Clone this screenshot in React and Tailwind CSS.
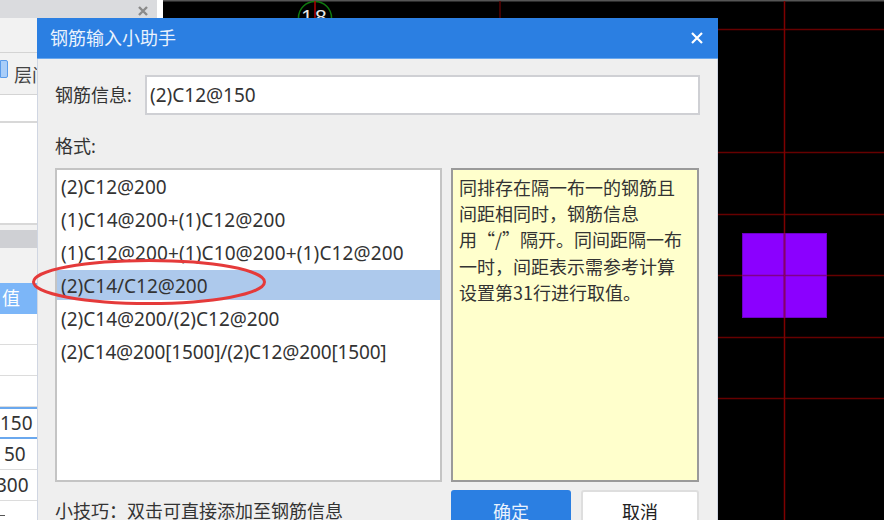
const FONT = "font-['Noto_Sans','Noto_Sans_CJK_SC',sans-serif]";
const CJK = "font-['Noto_Sans_CJK_SC','Noto_Sans',sans-serif]";

function LeftPanel() {
  const rowClass = "h-[31px] bg-white border-b border-[#dcdcdc] text-[19px] leading-[30px] text-[#333] whitespace-nowrap";
  return (
    <div className="w-[163px] h-[520px] shrink-0 bg-white flex flex-col overflow-hidden">
      <div className="w-[157px] h-[18px] shrink-0 bg-[#dadbde] flex justify-end items-start pr-[8px]">
        <svg width="12" height="12" viewBox="0 0 12 12" className="mt-[5px]"><path d="M2 2l8 8M10 2l-8 8" stroke="#8a8a8a" strokeWidth="2.4" /></svg>
      </div>
      <div className="h-[35px] shrink-0 bg-[#f2f2f2] border-b border-[#d4d4d4]" />
      <div className="h-[42px] shrink-0 bg-[#f2f2f2] border-b border-[#d4d4d4] relative">
        <div className="absolute left-0 top-[7px] w-[8px] h-[18px] bg-[#a9cdf8] border border-[#5a9bea] rounded-r-[2px]" />
        <span className="absolute left-[14px] top-[9px] text-[18px] leading-[26px] text-[#444]">层间</span>
      </div>
      <div className="h-[28px] shrink-0 bg-white border-b-2 border-[#d8d8d8]" />
      <div className="h-[102px] shrink-0 bg-white border-b-2 border-[#d8d8d8]" />
      <div className="h-[5px] shrink-0 bg-[#f2f2f2]" />
      <div className="h-[18px] shrink-0 bg-[#cfd0d4]" />
      <div className="h-[35px] shrink-0 bg-[#f2f2f2]" />
      <div className="h-[31px] shrink-0 bg-[#7cb6f8] text-[18px] leading-[31px] text-white pl-[2px]">值</div>
      <div className={rowClass} />
      <div className={rowClass} />
      <div className={rowClass} />
      <div className="h-[32px] bg-white border-y-2 border-[#6aa8ee] text-[19px] leading-[28px] text-[#333]">150</div>
      <div className={rowClass + " pl-[4px]"}>50</div>
      <div className={rowClass + " -ml-[4px]"}>300</div>
      <div className="h-[18px] bg-white relative"><div className="absolute left-0 bottom-[3px] w-[5px] h-[1px] bg-[#555]" /></div>
    </div>
  );
}

function Canvas() {
  const ys = [29.5, 152.5, 214.5, 275.5, 337.5, 398.5];
  return (
    <div className="relative flex-1 h-[520px] bg-black overflow-hidden">
      <svg width="721" height="520" className="block">
        <rect x="0" y="0" width="721" height="1.5" fill="#555" />
        {ys.map((y) => (
          <line key={y} x1="555" x2="721" y1={y} y2={y} stroke="#660000" strokeWidth="1.6" />
        ))}
        <rect x="579.5" y="233.5" width="84" height="84" fill="#8b00ff" stroke="#6a00c4" strokeWidth="1" />
        <line x1="579" x2="664" y1="275.5" y2="275.5" stroke="#80008c" strokeWidth="1.6" />
        <line x1="621.5" x2="621.5" y1="1" y2="520" stroke="#7e0000" strokeWidth="1.5" />
        <line x1="621.5" x2="621.5" y1="233" y2="318" stroke="#86006a" strokeWidth="1.5" />
        <line x1="337" x2="337" y1="1" y2="20" stroke="#5a0000" strokeWidth="1.5" />
        <circle cx="152" cy="18" r="16.5" fill="none" stroke="#0f7a0f" strokeWidth="1.5" />
        <line x1="152" x2="152" y1="1" y2="20" stroke="#b00000" strokeWidth="1.5" />
        <text x="152" y="24" fill="#e8e8e8" fontSize="21" textAnchor="middle" letterSpacing="2" fontFamily="Liberation Sans, sans-serif">18</text>
      </svg>
    </div>
  );
}

function Dialog() {
  const items = [
    { t: "(2)C12@200", c: "" },
    { t: "(1)C14@200+(1)C12@200", c: "tracking-[0.1px]" },
    { t: "(1)C12@200+(1)C10@200+(1)C12@200", c: "tracking-[0.12px]" },
    { t: "(2)C14/C12@200", c: "" },
    { t: "(2)C14@200/(2)C12@200", c: "" },
    { t: "(2)C14@200[1500]/(2)C12@200[1500]", c: "tracking-[-0.15px]" },
  ];
  const tip = [
    "同排存在隔一布一的钢筋且",
    "间距相同时，钢筋信息",
    "用“/”隔开。同间距隔一布",
    "一时，间距表示需参考计算",
    "设置第31行进行取值。",
  ];
  return (
    <div className="absolute left-[37px] top-[18px] w-[681px] h-[502px] bg-[#efefef] border-x border-[#d0d6e2] flex flex-col text-[18px] text-[#333]">
      <div className="h-[41px] -mx-px shrink-0 bg-[#2b7fe2] border-b border-[#6aa8ee] flex items-center justify-between pl-[13px] pr-[14px] text-white">
        <span className="text-[#e9f2fd]">钢筋输入小助手</span>
        <svg width="14" height="14" viewBox="0 0 14 14"><path d="M2 2l10 10M12 2L2 12" stroke="#fff" strokeWidth="2.2" /></svg>
      </div>
      <div className="flex-1 flex flex-col pl-[17px] pr-[18px] pt-[16px] overflow-hidden">
        <div className="flex items-center h-[40px] shrink-0 -mr-px">
          <span className="w-[90px] shrink-0">钢筋信息:</span>
          <div className="flex-1 h-[40px] bg-white border-2 border-[#cfd0d4] pl-[3px] leading-[36px] text-[19px]">(2)C12@150</div>
        </div>
        <div className="mt-[18px] h-[26px] leading-[26px] shrink-0">格式:</div>
        <div className="mt-[9px] flex gap-[9px] h-[314px] shrink-0">
          <div className="w-[387px] bg-white border-2 border-[#c4c4c4] pt-px flex flex-col gap-[3px] text-[19px]">
            {items.map((it, i) => (
              <div key={it.t} className={"h-[30px] leading-[32px] pl-[4px] whitespace-nowrap " + it.c + " " + (i === 3 ? "bg-[#adc9ec]" : "")}>{it.t}</div>
            ))}
          </div>
          <div className={"flex-1 bg-[#ffffcc] border-2 border-[#9a9a9a] pl-[6px] pt-[4px] leading-[26.2px] " + CJK}>
            {tip.map((t) => (
              <div key={t} className="whitespace-nowrap">{t}</div>
            ))}
          </div>
        </div>
        <div className="mt-[8px] flex items-start">
          <span className="mt-[6px] leading-[30px] whitespace-nowrap">小技巧：双击可直接添加至钢筋信息</span>
          <div className="ml-auto flex gap-[10px]">
            <div className="w-[120px] h-[40px] bg-[#2b7fe2] rounded-[3px] text-center leading-[44px] text-[#e9f2fd]">确定</div>
            <div className="w-[118px] h-[40px] bg-white border-2 border-[#dedede] rounded-[3px] text-center leading-[40px] text-[#222]">取消</div>
          </div>
        </div>
      </div>
    </div>
  );
}

export default function App() {
  return (
    <div className={"relative w-[884px] h-[520px] overflow-hidden flex " + FONT}>
      <LeftPanel />
      <Canvas />
      <Dialog />
      <svg width="240" height="50" className="absolute left-[31px] top-[257px] pointer-events-none">
        <ellipse cx="118" cy="25" rx="115.5" ry="21.5" fill="none" stroke="#e53a3a" strokeWidth="3" />
      </svg>
    </div>
  );
}
